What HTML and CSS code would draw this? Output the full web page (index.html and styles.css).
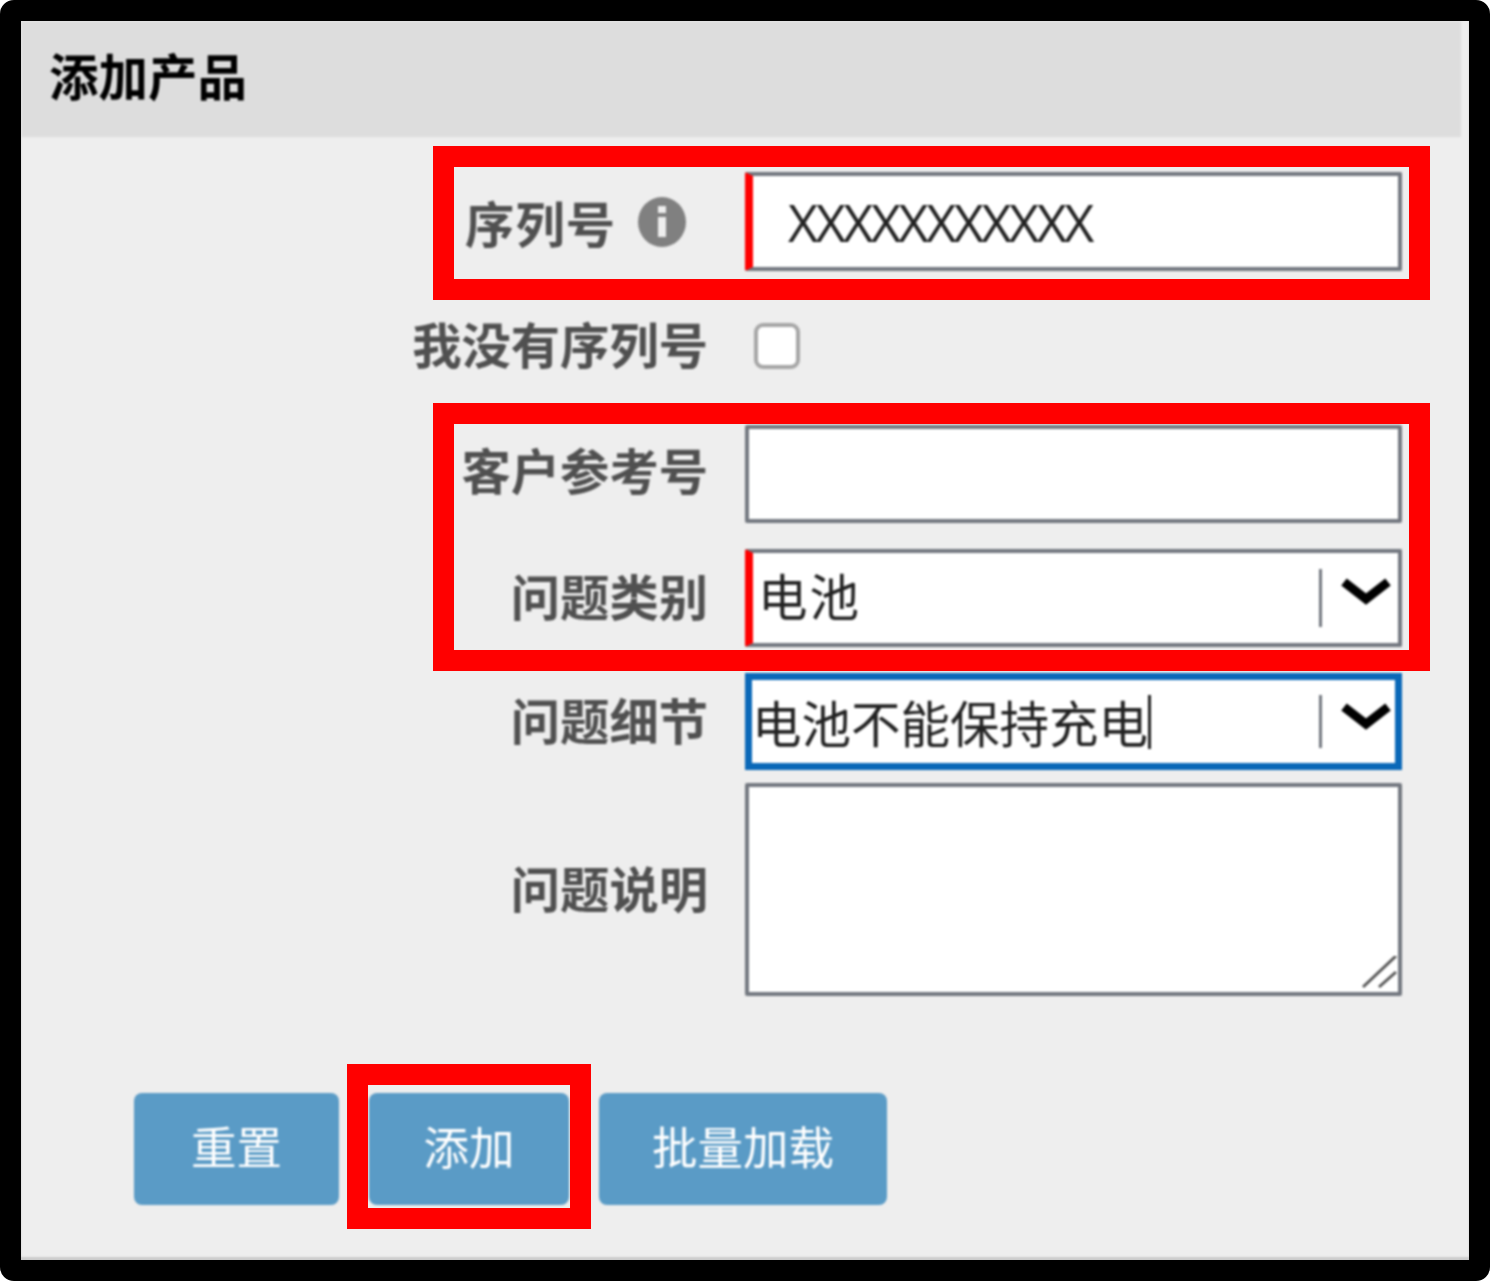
FILE: index.html
```html
<!DOCTYPE html>
<html lang="zh-CN">
<head>
    <meta charset="UTF-8">
    <meta name="viewport" content="width=device-width, initial-scale=1.0">
    <title>添加产品</title>
    <link rel="stylesheet" href="styles.css">
</head>
<body>

    <div class="frame">
        <div class="panel-title">添加产品</div>

        <form class="product-form">
            <div class="form-row row-serial">
                <label class="form-label label-serial">序列号
                    <svg class="info-icon" viewBox="0 0 50 50" width="50" height="50">
                        <ellipse cx="25" cy="25" rx="24" ry="25" fill="#808080"/>
                        <rect x="21" y="9" width="8" height="7" fill="#eee"/>
                        <rect x="21" y="20" width="8" height="20" fill="#eee"/>
                    </svg>
                </label>
                <div class="field required field-serial">
                    <input class="field-input input-serial" type="text" value="XXXXXXXXXXX">
                </div>
            </div>

            <div class="form-row row-check">
                <label class="form-label" for="no-serial">我没有序列号</label>
                <input class="check" type="checkbox" id="no-serial">
            </div>

            <div class="form-row row-ref">
                <label class="form-label">客户参考号</label>
                <div class="field"></div>
            </div>

            <div class="form-row row-type">
                <label class="form-label">问题类别</label>
                <div class="field required combo">
                    <span class="combo-text">电池</span>
                    <span class="combo-sep"></span>
                    <svg class="combo-arrow" viewBox="0 0 50 28" width="50" height="28">
                        <polyline points="3,4 25,21 47,4" fill="none" stroke="#000" stroke-width="9"/>
                    </svg>
                </div>
            </div>

            <div class="form-row row-detail">
                <label class="form-label">问题细节</label>
                <div class="field combo focused">
                    <span class="combo-text">电池不能保持充电</span><span class="caret"></span>
                    <span class="combo-sep"></span>
                    <svg class="combo-arrow" viewBox="0 0 50 28" width="50" height="28">
                        <polyline points="3,4 25,21 47,4" fill="none" stroke="#000" stroke-width="9"/>
                    </svg>
                </div>
            </div>

            <div class="form-row row-desc">
                <label class="form-label">问题说明</label>
                <div class="field field-area">
                    <svg class="grip" viewBox="0 0 36 36" width="36" height="36">
                        <path d="M1 31 L34 0 M17 31 L34 16" stroke="#555" stroke-width="3" fill="none"/>
                    </svg>
                </div>
            </div>

            <div class="form-actions">
                <button class="btn btn-reset" type="button">重置</button>
                <button class="btn btn-add" type="button">添加</button>
                <button class="btn btn-bulk" type="button">批量加载</button>
            </div>
        </form>

        <div class="mark mark-serial"></div>
        <div class="mark mark-ref"></div>
        <div class="mark mark-add"></div>
    </div>

</body>
</html>
```

FILE: styles.css
```css
body {
    margin: 0;
    background: #fff;
    font-family: "Noto Sans CJK SC", "Liberation Sans", sans-serif;
}

.frame {
    position: relative;
    box-sizing: border-box;
    width: 1490px;
    height: 1281px;
    border: 21px solid #000;
    border-radius: 14px;
    background: #eee;
    box-shadow: inset 0 -3px 2px #ccc;
    overflow: hidden;
}

.panel-title {
    box-sizing: border-box;
    height: 116px;
    margin-right: 8px;
    padding-left: 28px;
    background: #ddd;
    color: #000;
    font-size: 49.5px;
    font-weight: 700;
    line-height: 108px;
    filter: blur(0.8px);
}

.product-form {
    padding: 35px 67px 0 0;
    filter: blur(0.8px);
}

.form-row {
    display: flex;
    align-items: center;
}

.row-check { margin-top: 42px; }
.row-ref { margin-top: 46px; }
.row-type, .row-detail { margin-top: 26px; }
.row-desc { margin-top: 13px; }

.form-label {
    flex: none;
    display: flex;
    align-items: center;
    justify-content: flex-end;
    box-sizing: border-box;
    width: 687px;
    margin-right: 37px;
    padding-bottom: 6px;
    color: #505050;
    font-size: 49.3px;
    font-weight: 700;
    line-height: 60px;
    white-space: nowrap;
}

.row-ref .form-label {
    padding-bottom: 10px;
}

.label-serial {
    padding: 0 21px 0 0;
    letter-spacing: 1px;
}

.info-icon {
    margin-left: 21px;
}

.field {
    position: relative;
    box-sizing: border-box;
    display: flex;
    align-items: center;
    flex: 1;
    height: 98px;
    border: 4px solid #737880;
    border-radius: 2px;
    background: #fff;
}

.field-serial {
    height: 99px;
}

.field.required {
    border-left: 8px solid #f00;
}

.field-input {
    width: 100%;
    height: 100%;
    box-sizing: border-box;
    padding: 0 0 0 35px;
    border: 0;
    outline: 0;
    background: transparent;
    color: #222;
    font-family: "Open Sans", sans-serif;
    font-size: 52px;
    letter-spacing: -2.4px;
}

.check {
    appearance: none;
    box-sizing: border-box;
    width: 46px;
    height: 46px;
    margin: 0 0 0 9px;
    border: 4px solid #a6a6a6;
    border-radius: 9px;
    background: #fff;
}

.combo {
    padding-left: 5px;
    color: #222;
    font-size: 49.5px;
    line-height: 60px;
}

.combo-text {
    padding-bottom: 6px;
    letter-spacing: 2px;
    white-space: nowrap;
}

.focused {
    height: 97px;
    padding-left: 0;
    border: 7px solid #0a68b8;
    border-radius: 0;
}

.focused .combo-text {
    padding-bottom: 0;
    letter-spacing: 0;
}

.caret {
    width: 3px;
    height: 54px;
    background: #222;
}

.combo-sep {
    width: 3px;
    height: 58px;
    margin-left: auto;
    background: #737880;
}

.focused .combo-sep {
    height: 53px;
}

.combo-arrow {
    flex: none;
    overflow: visible;
    margin: -12px 7px 0 19px;
}

.focused .combo-arrow {
    margin: -10px 4px 0 19px;
}

.field-area {
    flex: 1;
    height: 213px;
}

.grip {
    position: absolute;
    right: 0;
    bottom: 0;
}

.form-actions {
    display: flex;
    gap: 30px;
    margin: 97px 0 0 113px;
}

.btn {
    height: 112px;
    padding: 0 0 8px;
    border: 0;
    border-radius: 8px;
    background: #5a9bc6;
    color: #fff;
    font-family: "Noto Sans CJK SC", sans-serif;
    font-size: 45.5px;
    font-weight: 400;
}

.btn-reset { width: 205px; }
.btn-add { width: 200px; }
.btn-bulk { width: 288px; }

/* red annotation boxes drawn over the form */
.mark {
    position: absolute;
    box-sizing: border-box;
    border: 21px solid #f00;
}

.mark-serial {
    left: 412px;
    top: 125px;
    width: 997px;
    height: 154px;
}

.mark-ref {
    left: 412px;
    top: 382px;
    width: 997px;
    height: 268px;
}

.mark-add {
    left: 326px;
    top: 1043px;
    width: 244px;
    height: 165px;
}
```
